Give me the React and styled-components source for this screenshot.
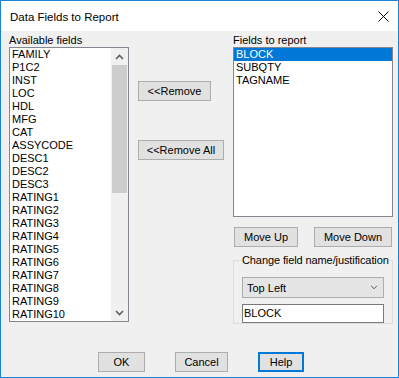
import React from "react";
import styled, {createGlobalStyle} from "styled-components";

const GlobalStyle = createGlobalStyle`
    html, body {
        margin: 0;
        padding: 0;
        background: #ffffff;
    }
    body {
        font-family: "Liberation Sans", Arial, sans-serif;
        font-size: 11px;
        color: #000;
    }
`;

const Window = styled.div`
    width: 399px;
    height: 378px;
    box-sizing: border-box;
    border: 1px solid #1883d7;
    display: flex;
    flex-direction: column;
    background: #f0f0f0;
`;

const TitleBar = styled.div`
    height: 30px;
    flex: none;
    background: #ffffff;
    display: flex;
    align-items: center;
    justify-content: space-between;
    padding: 0 9px;
`;

const Title = styled.span`
    font-size: 11.5px;
    line-height: 14px;
    margin-top: 1px;
`;

const Body = styled.div`
    flex: 1;
    display: flex;
    flex-direction: column;
    padding: 3px 5px 5px 8px;
`;

const Columns = styled.div`
    display: grid;
    grid-template-columns: 120px 86px 160px;
    column-gap: 9px;
    align-items: start;
`;

const Column = styled.div`
    display: flex;
    flex-direction: column;
    align-items: flex-start;
`;

const Label = styled.div`
    line-height: 13px;
    height: 13px;
`;

const ListBox = styled.div`
    box-sizing: border-box;
    width: ${(p) => p.$width}px;
    height: ${(p) => p.$height}px;
    background: #ffffff;
    border: 1px solid #828790;
    display: flex;
    overflow: hidden;
`;

const Items = styled.div`
    flex: 1;
    display: flex;
    flex-direction: column;
`;

const Item = styled.div`
    height: 13px;
    line-height: 13px;
    padding-left: 2px;
    white-space: nowrap;
    background: ${(p) => (p.$selected ? "#0078d7" : "transparent")};
    color: ${(p) => (p.$selected ? "#ffffff" : "#000000")};
`;

const ScrollBar = styled.div`
    width: 17px;
    flex: none;
    background: #f0f0f0;
    display: flex;
    flex-direction: column;
`;

const ScrollArrow = styled.div`
    height: 17px;
    flex: none;
    display: flex;
    align-items: center;
    justify-content: center;
`;

const Track = styled.div`
    flex: 1;
    display: flex;
    flex-direction: column;
`;

const Thumb = styled.div`
    height: 128px;
    margin: 0 1px;
    background: #cdcdcd;
`;

const Button = styled.button`
    box-sizing: border-box;
    width: ${(p) => p.$width}px;
    height: 20px;
    padding: 0;
    font-family: inherit;
    font-size: 11px;
    color: #000;
    background: #e1e1e1;
    border: ${(p) => (p.$default ? "2px solid #0078d7" : "1px solid #adadad")};
    margin-top: ${(p) => p.$top || 0}px;
`;

const ButtonRow = styled.div`
    display: flex;
    justify-content: space-between;
    align-self: stretch;
    padding: 0 1px;
    margin-top: 10px;
`;

const Group = styled.fieldset`
    box-sizing: border-box;
    width: 160px;
    min-width: 0;
    margin: 7px 0 0 0;
    padding: 10px 0 0 8px;
    border: 1px solid #dcdcdc;
    display: flex;
    flex-direction: column;
    gap: 6px;
`;

const Legend = styled.legend`
    padding: 0;
    line-height: 13px;
    font-size: 11px;
    white-space: nowrap;
    letter-spacing: -0.1px;
`;

const Combo = styled.div`
    box-sizing: border-box;
    width: 142px;
    height: 21px;
    background: #e5e5e5;
    border: 1px solid #adadad;
    display: flex;
    align-items: center;
    justify-content: space-between;
    padding: 0 5px 0 4px;
`;

const TextBox = styled.div`
    box-sizing: border-box;
    width: 142px;
    height: 19px;
    background: #ffffff;
    border: 1px solid #7a7a7a;
    line-height: 17px;
    padding-left: 1px;
`;

const Footer = styled.div`
    margin-top: auto;
    display: flex;
    gap: 30px;
    padding-left: 89px;
`;

const available = [
    "FAMILY", "P1C2", "INST", "LOC", "HDL", "MFG", "CAT", "ASSYCODE",
    "DESC1", "DESC2", "DESC3", "RATING1", "RATING2", "RATING3", "RATING4",
    "RATING5", "RATING6", "RATING7", "RATING8", "RATING9", "RATING10",
];

const reported = ["BLOCK", "SUBQTY", "TAGNAME"];

function Chevron({up, color = "#606060", width = 9, height = 6, stroke = 1.6}) {
    const pts = up ? "1,5 4.5,1.5 8,5" : "1,1 4.5,4.5 8,1";
    return (
        <svg width={width} height={height} viewBox="0 0 9 6">
            <polyline points={pts} fill="none" stroke={color} strokeWidth={stroke}/>
        </svg>
    );
}

export default function App() {
    return (
        <>
            <GlobalStyle/>
            <Window>
                <TitleBar>
                    <Title>Data Fields to Report</Title>
                    <svg width="11" height="11" viewBox="0 0 11 11">
                        <path d="M0.5 0.5 L10.5 10.5 M10.5 0.5 L0.5 10.5" stroke="#000" strokeWidth="1"/>
                    </svg>
                </TitleBar>
                <Body>
                    <Columns>
                        <Column>
                            <Label>Available fields</Label>
                            <ListBox $width={120} $height={275}>
                                <Items>
                                    {available.map((f) => <Item key={f}>{f}</Item>)}
                                </Items>
                                <ScrollBar>
                                    <ScrollArrow><Chevron up/></ScrollArrow>
                                    <Track><Thumb/></Track>
                                    <ScrollArrow><Chevron/></ScrollArrow>
                                </ScrollBar>
                            </ListBox>
                        </Column>
                        <Column>
                            <Button $width={73} $top={47}>&lt;&lt;Remove</Button>
                            <Button $width={86} $top={39}>&lt;&lt;Remove All</Button>
                        </Column>
                        <Column>
                            <Label>Fields to report</Label>
                            <ListBox $width={160} $height={170}>
                                <Items>
                                    {reported.map((f, i) => <Item key={f} $selected={i === 0}>{f}</Item>)}
                                </Items>
                            </ListBox>
                            <ButtonRow>
                                <Button $width={64}>Move Up</Button>
                                <Button $width={78}>Move Down</Button>
                            </ButtonRow>
                            <Group>
                                <Legend>Change field name/justification</Legend>
                                <Combo>
                                    <span>Top Left</span>
                                    <Chevron color="#333" width={8} height={5} stroke={1}/>
                                </Combo>
                                <TextBox>BLOCK</TextBox>
                            </Group>
                        </Column>
                    </Columns>
                    <Footer>
                        <Button $width={47}>OK</Button>
                        <Button $width={53}>Cancel</Button>
                        <Button $width={46} $default>Help</Button>
                    </Footer>
                </Body>
            </Window>
        </>
    );
}
